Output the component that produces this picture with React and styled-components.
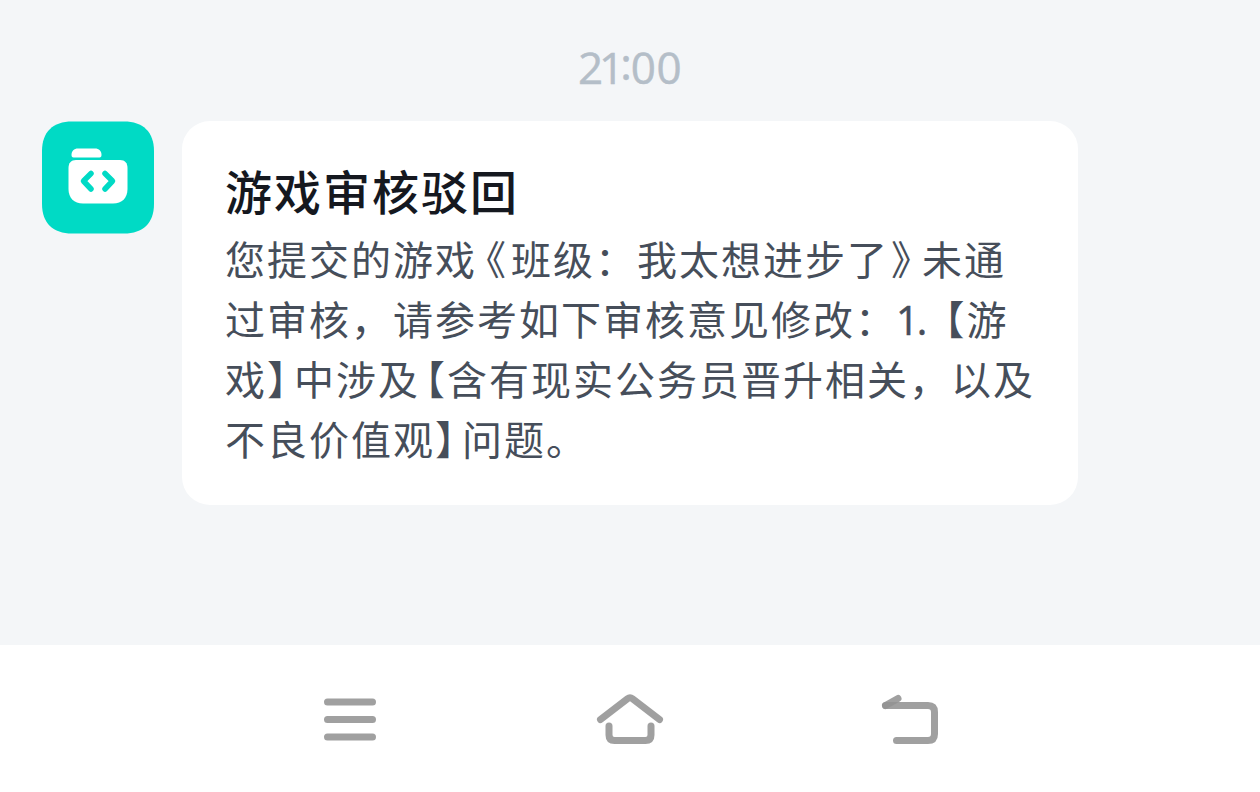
import React from "react";
import styled, { createGlobalStyle, css } from "styled-components";

const GlobalStyle = createGlobalStyle`
  * {
    box-sizing: border-box;
  }
  body {
    margin: 0;
    background-color: #f4f6f8;
    font-family: "Noto Sans CJK SC", sans-serif;
  }
`;

const Screen = styled.div`
  display: flex;
  flex-direction: column;
  width: 1260px;
  height: 792px;
  overflow: hidden;
`;

const Chat = styled.main`
  flex: 1;
  padding: 37px 42px 0;
`;

const Time = styled.time`
  display: flex;
  justify-content: center;
  height: 60px;
  line-height: 60px;
  margin-bottom: 24px;
  font-family: "Open Sans", sans-serif;
  font-size: 44px;
  -webkit-text-stroke: 0.5px #b4bec8;
  color: #b4bec8;
`;

const Digits = styled.span`
  letter-spacing: ${({ $spacing }) => $spacing}px;
`;

const TimeColon = styled.span`
  margin-top: -4px;
  letter-spacing: -1px;
`;

const Message = styled.div`
  display: flex;
  align-items: flex-start;
  gap: 28px;
`;

const Avatar = styled.svg`
  display: block;
  flex: none;
  width: 112px;
  height: 113px;
`;

const Card = styled.section`
  width: 896px;
  height: 384px;
  padding: 35px 0 0 43px;
  border-radius: 28px;
  background-color: white;
`;

const Title = styled.h1`
  margin: 0;
  height: 72px;
  line-height: 68px;
  font-size: 47px;
  font-weight: 500;
  letter-spacing: 2px;
  color: #15181f;
`;

const Line = styled.p`
  margin: 0;
  height: 60px;
  line-height: 60px;
  font-size: 40px;
  letter-spacing: 2px;
  white-space: pre;
  color: #464e5a;
`;

const Latin = styled.span`
  font-family: "Open Sans", sans-serif;
  letter-spacing: -2px;
  -webkit-text-stroke: 0.5px #464e5a;
  margin-left: -1px;
  margin-right: 14px;
`;

const Bracket = styled.span`
  font-feature-settings: "halt";
  letter-spacing: 0;
  ${({ $open, $wide }) =>
    $open
      ? css`
          margin-left: ${$wide ? 9 : 5}px;
          margin-right: ${$wide ? 5 : 2}px;
        `
      : css`
          margin-left: ${$wide ? 2 : 0}px;
          margin-right: ${$wide ? 11 : 7}px;
        `}
`;

const NavBar = styled.nav`
  display: flex;
  justify-content: center;
  gap: 200px;
  height: 147px;
  padding-top: 35px;
  background-color: white;
`;

const NavIcon = styled.svg`
  width: 80px;
  height: 80px;
  fill: none;
  stroke: rgba(146, 146, 146, 0.87);
  stroke-width: 7;
  stroke-linecap: round;
  stroke-linejoin: round;
`;

const FolderAvatar = () => (
  <Avatar viewBox="0 0 112 113">
    <path
      d="M30 0.5H82C101 0.5 112 11 112 30V83C112 102 101 112.500 82 112.500H30C11 112.500 0 102 0 83V30C0 11 11 0.500 30 0.500Z"
      fill="#00dac5"
    />
    <path
      d="M31.500 36.500C30 36.500 29.500 35.500 29.500 34C29.500 30 32 27.500 36 27.500H53C57 27.500 59.500 30 59.500 34C59.500 35.500 59 36.500 57.500 36.500Z"
      fill="white"
    />
    <path
      d="M34 39H78C83 39 85.500 42 85.500 47V68C85.500 77 80 82.500 71 82.500H41C32 82.500 26.500 77 26.500 68V47C26.500 42 29 39 34 39Z"
      fill="white"
    />
    <path
      d="M49 52.500L41.500 60L49 68M63 52.500L70.500 60L63 68"
      fill="none"
      stroke="#00dac5"
      strokeWidth="5.5"
      strokeLinecap="round"
      strokeLinejoin="round"
    />
  </Avatar>
);

const App = () => (
  <>
    <GlobalStyle />
    <Screen>
      <Chat>
        <Time>
          <Digits $spacing={-4}>21</Digits>
          <TimeColon>:</TimeColon>
          <Digits $spacing={0.5}>00</Digits>
        </Time>
        <Message>
          <FolderAvatar />
          <Card>
            <Title>游戏审核驳回</Title>
            <Line>
              您提交的游戏<Bracket $open $wide>《</Bracket>班级：我太想进步了
              <Bracket $wide>》</Bracket>未通
            </Line>
            <Line>
              过审核，请参考如下审核意见修改：<Latin>1.</Latin>
              <Bracket $open>【</Bracket>游
            </Line>
            <Line>
              戏<Bracket>】</Bracket>中涉及<Bracket $open>【</Bracket>
              含有现实公务员晋升相关，以及
            </Line>
            <Line>
              不良价值观<Bracket>】</Bracket>问题。
            </Line>
          </Card>
        </Message>
      </Chat>
      <NavBar>
        <NavIcon viewBox="0 0 80 80">
          <path d="M17.500 22H62.500M17.500 39.500H62.500M17.500 57H62.500" />
        </NavIcon>
        <NavIcon viewBox="0 0 80 80">
          <path d="M10.500 39.500L37.500 18.700Q40 16.800 42.500 18.700L69.500 39.500" />
          <path d="M19 46V55Q19 60.500 24.500 60.500H55.500Q61 60.500 61 55V46" />
        </NavIcon>
        <NavIcon viewBox="0 0 80 80">
          <path d="M15.500 25.500H58Q64.500 25.500 64.500 32V54Q64.500 60.500 58 60.500H26.500" />
          <path d="M15.500 25.500L28 18.500" />
        </NavIcon>
      </NavBar>
    </Screen>
  </>
);

export default App;
